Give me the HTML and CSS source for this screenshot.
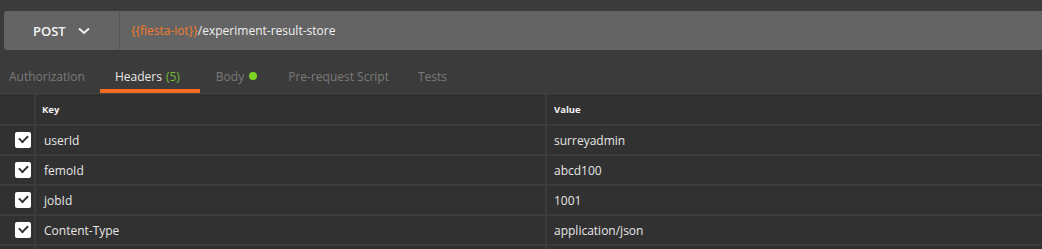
FILE: index.html
```html
<!DOCTYPE html>
<html lang="en">
<head>
    <meta charset="UTF-8">
    <title>Request Builder</title>
    <link rel="stylesheet" href="styles.css">
</head>
<body>
    <div class="url-bar">
        <div class="method">
            <span>POST</span>
            <svg class="chevron" width="12" height="8" viewBox="0 0 12 8">
                <path d="M1 1.5 L6 6 L11 1.5" fill="none" stroke="#f0f0f0" stroke-width="2"/>
            </svg>
        </div>
        <div class="url">
            <span class="var">{{fiesta-iot}}</span>/experiment-result-store
        </div>
    </div>

    <nav class="tabs">
        <span class="tab">Authorization</span>
        <span class="tab active">Headers <span class="count">(5)</span></span>
        <span class="tab">Body <i class="dot"></i></span>
        <span class="tab pre">Pre-request Script</span>
        <span class="tab">Tests</span>
    </nav>

    <div class="table">
        <div class="row head">
            <div class="cell check"></div>
            <div class="cell key">Key</div>
            <div class="cell value">Value</div>
        </div>
        <div class="row">
            <div class="cell check"><span class="box"></span></div>
            <div class="cell key">userId</div>
            <div class="cell value">surreyadmin</div>
        </div>
        <div class="row">
            <div class="cell check"><span class="box"></span></div>
            <div class="cell key">femoId</div>
            <div class="cell value">abcd100</div>
        </div>
        <div class="row">
            <div class="cell check"><span class="box"></span></div>
            <div class="cell key">jobId</div>
            <div class="cell value">1001</div>
        </div>
        <div class="row">
            <div class="cell check"><span class="box"></span></div>
            <div class="cell key">Content-Type</div>
            <div class="cell value">application/json</div>
        </div>
        <div class="row">
            <div class="cell check"></div>
            <div class="cell key"></div>
            <div class="cell value"></div>
        </div>
    </div>
</body>
</html>
```

FILE: styles.css
```css
* { box-sizing: border-box; }
body {
    font-family: 'Open Sans', sans-serif;
    margin: 0;
    background: #3b3b3b;
    color: #e6e6e6;
    height: 249px;
    overflow: hidden;
}
.url-bar {
    display: flex;
    margin: 11px 0 0 4px;
    height: 39px;
    background: #646464;
    border-radius: 3px 0 0 3px;
}
.method {
    width: 116px;
    display: flex;
    align-items: center;
    padding-left: 29px;
    gap: 12px;
    font-size: 13px;
    font-weight: 600;
    color: #f4f4f4;
    border-right: 1px solid #575757;
}
.chevron { margin-top: 1px; }
.url {
    display: flex;
    align-items: center;
    padding-left: 11px;
    font-size: 12px;
    color: #f0f0f0;
}
.var { color: #f47b2a; }
.tabs {
    display: flex;
    height: 44px;
    border-bottom: 1px solid #444;
    padding-left: 9px;
}
.tab {
    display: flex;
    align-items: center;
    font-size: 12px;
    color: #7a7a7a;
    margin-right: 31px;
    padding-top: 9px;
}
.tab.pre { margin-right: 29px; }
.tab.active {
    color: #e8e8e8;
    position: relative;
    margin-left: -1px;
    margin-right: 36px;
}
.tab.active::after {
    content: "";
    position: absolute;
    left: -15px;
    right: -20px;
    bottom: 0;
    height: 4px;
    background: #f26b21;
}
.count {
    color: #77b932;
    margin-left: 4px;
}
.dot {
    display: inline-block;
    width: 8px;
    height: 8px;
    border-radius: 50%;
    background: #7ed321;
    margin-left: 5px;
}
.table {
    background: #313131;
}
.row {
    display: flex;
    height: 30px;
    border-bottom: 2px solid #3c3c3c;
}
.row.head {
    height: 32px;
    font-weight: 700;
    color: #f2f2f2;
}
.cell {
    display: flex;
    align-items: center;
}
.check {
    width: 36px;
    border-right: 2px solid #3c3c3c;
    padding-left: 15px;
}
.key {
    width: 511px;
    padding-left: 8px;
    font-size: 12px;
    border-right: 2px solid #3c3c3c;
}
.head .key, .head .value { font-size: 9.5px; }
.head .key { padding-left: 6px; }
.value {
    flex: 1;
    padding-left: 7px;
    font-size: 12px;
}
.box {
    width: 16px;
    height: 16px;
    background: #ffffff;
    border-radius: 2px;
    position: relative;
}
.box::after {
    content: "";
    position: absolute;
    left: 4px;
    top: 3px;
    width: 7px;
    height: 4px;
    border-left: 2px solid #333;
    border-bottom: 2px solid #333;
    transform: rotate(-45deg);
}
```
